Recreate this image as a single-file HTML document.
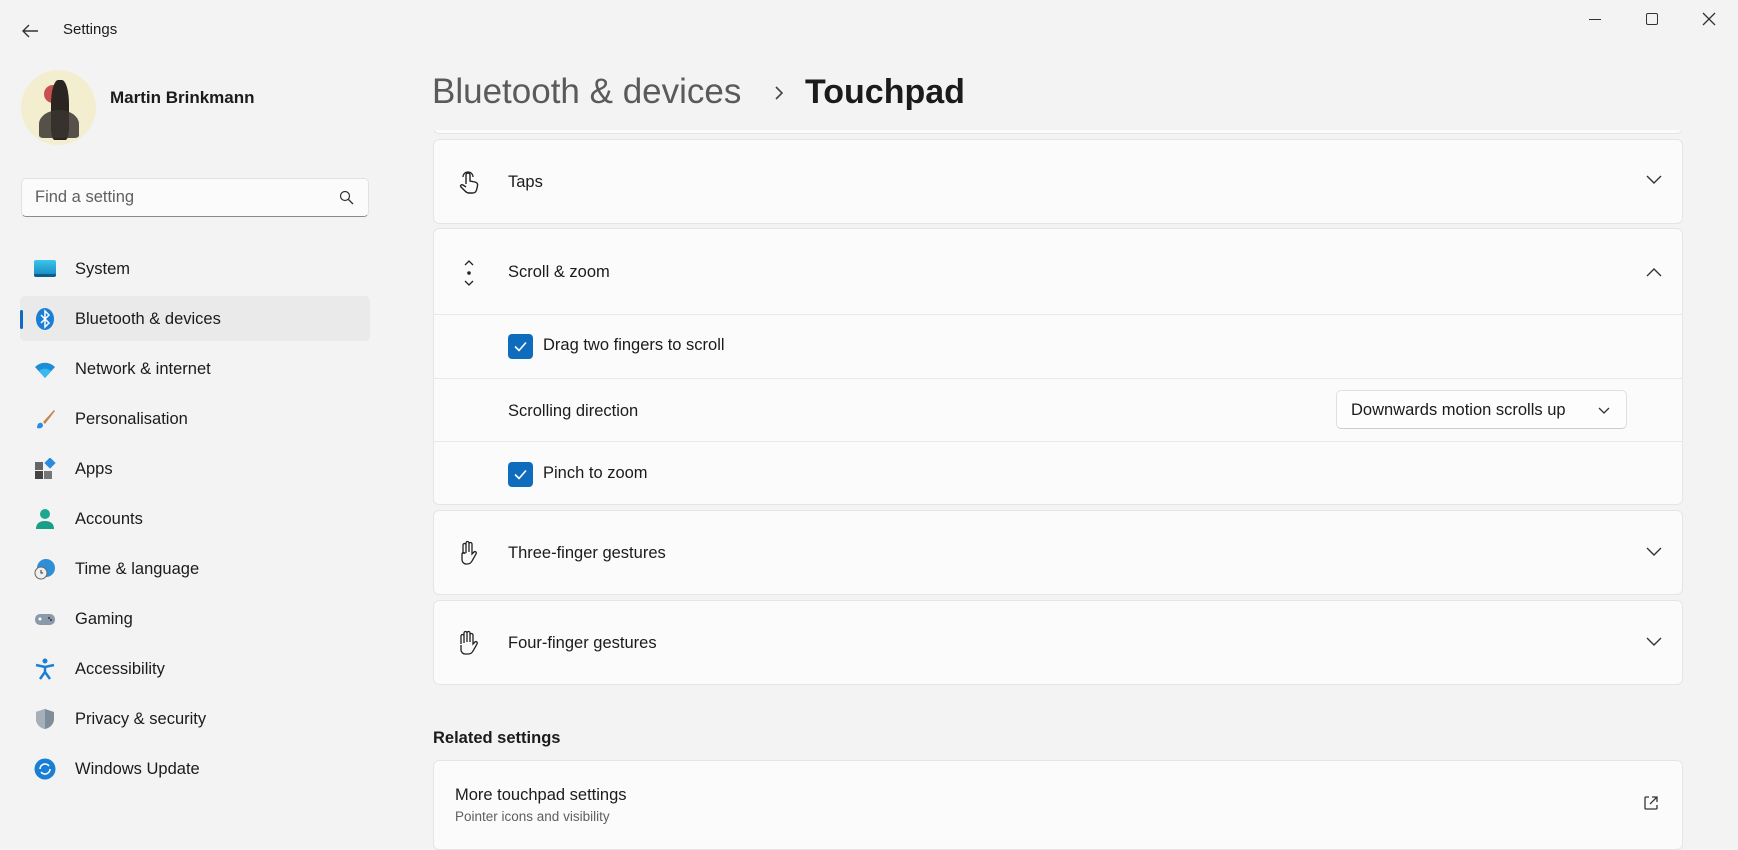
<!DOCTYPE html>
<html><head><meta charset="utf-8"><style>
*{box-sizing:border-box;margin:0;padding:0}
body{width:1738px;height:833px;overflow:hidden;background:#f3f3f3;font-family:"Liberation Sans",sans-serif;color:#1b1b1b;position:relative}
.a{position:absolute}
.nav{position:absolute;left:20px;width:350px;height:45px;display:flex;align-items:center;font-size:16.5px}
.nav .ic{position:absolute;left:14px;top:11px;width:22px;height:22px}
.nav span{position:absolute;left:55px}
.card{position:absolute;left:433px;width:1250px;background:#fbfbfb;border:1px solid #e5e5e5;border-radius:6px}
.lbl{position:absolute;left:74px;font-size:16.5px}
.chev{position:absolute;left:1212px}
.cb{position:absolute;left:74px;width:25px;height:25px;border-radius:4px;background:#0f6cbd}
.div{position:absolute;left:0;right:0;height:1px;background:#e8e8e8}
</style></head><body>
<svg class="a" style="left:20px;top:22px" width="20" height="18" viewBox="0 0 20 18"><path d="M18 9H3M9 3L3 9l6 6" stroke="#333" stroke-width="1.4" fill="none"/></svg>
<div class="a" style="left:63px;top:21px;font-size:15px">Settings</div>
<div class="a" style="left:1589px;top:19px;width:12px;height:1px;background:#333"></div>
<div class="a" style="left:1646px;top:13px;width:12px;height:12px;border:1.3px solid #333;border-radius:2px"></div>
<svg class="a" style="left:1702px;top:12px" width="14" height="14"><path d="M1 1L13 13M13 1L1 13" stroke="#333" stroke-width="1.3"/></svg>
<div class="a" style="left:21px;top:70px;width:75px;height:75px;border-radius:50%;background:#f3eed0;overflow:hidden">
<div class="a" style="left:23px;top:15px;width:18px;height:18px;border-radius:50%;background:#c85050"></div>
<div class="a" style="left:30px;top:10px;width:18px;height:60px;background:#2a2520;border-radius:40% 40% 20% 20%"></div>
<div class="a" style="left:18px;top:40px;width:40px;height:28px;background:#3a3530;border-radius:50% 50% 10% 10%;opacity:.85"></div>
</div>
<div class="a" style="left:110px;top:88px;font-size:17px;font-weight:bold">Martin Brinkmann</div>
<div class="a" style="left:21px;top:178px;width:348px;height:39px;background:#fbfbfb;border:1px solid #e2e2e2;border-bottom:1px solid #8a8a8a;border-radius:5px"></div>
<div class="a" style="left:35px;top:188px;font-size:16.5px;color:#5f5f5f">Find a setting</div>
<svg class="a" style="left:339px;top:190px" width="15" height="15"><circle cx="6" cy="6" r="4.5" stroke="#333" stroke-width="1.2" fill="none"/><path d="M9.5 9.5L14 14" stroke="#333" stroke-width="1.3"/></svg>
<div class="a" style="left:20px;top:296px;width:350px;height:45px;background:#eaeaea;border-radius:5px"></div>
<div class="a" style="left:20px;top:310px;width:3px;height:19px;background:#0f6cbd;border-radius:2px"></div>
<div class="nav" style="top:247px"><div class="ic" style="top:13px;height:17px;background:linear-gradient(#3bc6ea,#1a8fc8);border-radius:2px;border-bottom:3px solid #0b5e8a"></div><span>System</span></div>
<div class="nav" style="top:297px"><svg class="ic" viewBox="0 0 22 22"><ellipse cx="11" cy="11" rx="9" ry="11" fill="#1a7fd4"/><path d="M7 7l8 8-4 4V3l4 4-8 8" stroke="#fff" stroke-width="1.5" fill="none"/></svg><span>Bluetooth &amp; devices</span></div>
<div class="nav" style="top:347px"><svg class="ic" viewBox="0 0 22 22"><path d="M1 9a14 14 0 0 1 20 0l-10 11z" fill="#1a8fd8"/><path d="M5 13a9 9 0 0 1 12 0l-6 7z" fill="#3bb8ee"/></svg><span>Network &amp; internet</span></div>
<div class="nav" style="top:397px"><svg class="ic" viewBox="0 0 22 22"><path d="M20 2L9 14l2 2L21 3z" fill="#c9844a"/><path d="M3 20c0-4 2-6 5-5l1 2c0 3-3 4-6 3z" fill="#2c8ee0"/></svg><span>Personalisation</span></div>
<div class="nav" style="top:447px"><svg class="ic" viewBox="0 0 22 22"><rect x="1" y="4" width="8" height="8" fill="#666"/><rect x="1" y="13" width="8" height="8" fill="#444"/><rect x="10" y="13" width="8" height="8" fill="#777"/><rect x="12" y="1" width="8" height="8" fill="#2a8be0" transform="rotate(45 16 5)"/></svg><span>Apps</span></div>
<div class="nav" style="top:497px"><svg class="ic" viewBox="0 0 22 22"><circle cx="11" cy="6" r="5" fill="#1fa68f"/><path d="M2 21c0-6 4-8 9-8s9 2 9 8z" fill="#16a085"/></svg><span>Accounts</span></div>
<div class="nav" style="top:547px"><svg class="ic" viewBox="0 0 22 22"><circle cx="12" cy="10" r="9" fill="#2e8fd8"/><circle cx="7" cy="15" r="6" fill="#eee" stroke="#666"/><path d="M7 12v3h2" stroke="#333" fill="none"/></svg><span>Time &amp; language</span></div>
<div class="nav" style="top:597px"><svg class="ic" viewBox="0 0 22 22"><rect x="1" y="6" width="20" height="11" rx="5" fill="#8a9aaa"/><circle cx="6" cy="11" r="1.5" fill="#fff"/><circle cx="15" cy="10" r="1" fill="#333"/><circle cx="17" cy="12" r="1" fill="#333"/></svg><span>Gaming</span></div>
<div class="nav" style="top:647px"><svg class="ic" viewBox="0 0 22 22"><circle cx="11" cy="3" r="2.5" fill="#1a7fd4"/><path d="M2 7l9 2 9-2M11 9v5l-5 7M11 14l5 7" stroke="#1a7fd4" stroke-width="2.5" fill="none"/></svg><span>Accessibility</span></div>
<div class="nav" style="top:697px"><svg class="ic" viewBox="0 0 22 22"><path d="M11 1l9 3v7c0 5-4 9-9 10C6 20 2 16 2 11V4z" fill="#7f8c99"/><path d="M11 1v20C6 20 2 16 2 11V4z" fill="#a5b0ba"/></svg><span>Privacy &amp; security</span></div>
<div class="nav" style="top:747px"><svg class="ic" viewBox="0 0 22 22"><circle cx="11" cy="11" r="10.5" fill="#1a7fd4"/><path d="M6 11a5 5 0 0 1 9-3M16 11a5 5 0 0 1-9 3" stroke="#fff" stroke-width="1.6" fill="none"/></svg><span>Windows Update</span></div>
<div class="card" style="top:110px;height:24px;border-top:none"></div>
<div class="a" style="left:420px;top:60px;width:1280px;height:70px;background:#f3f3f3"></div>
<div class="a" style="left:432px;top:72px;font-size:35px;color:#5a5a5a">Bluetooth &amp; devices</div>
<svg class="a" style="left:773px;top:85px" width="12" height="16"><path d="M3 2l6 6-6 6" stroke="#444" stroke-width="1.6" fill="none"/></svg>
<div class="a" style="left:805px;top:73px;font-size:34px;font-weight:bold;color:#1b1b1b">Touchpad</div>
<div class="card" style="top:139px;height:85px">
<svg class="a" style="left:24px;top:30px" width="22" height="24" viewBox="0 0 22 24"><path d="M8 14V5a2 2 0 0 1 4 0v6l5 1c2 .5 3 2 2.5 4l-1 4c-.5 2-2 3-4 3H11c-2 0-3-1-4-2l-4-4c-1-1 0-3 2-2l3 2" stroke="#222" stroke-width="1.4" fill="none"/><path d="M5 7a5 5 0 0 1 10 0" stroke="#222" stroke-width="1.3" fill="none"/></svg>
<div class="lbl" style="top:33px">Taps</div>
<svg class="chev" style="top:35px" width="16" height="10"><path d="M1 1l7 7 7-7" stroke="#333" stroke-width="1.4" fill="none"/></svg>
</div>
<div class="card" style="top:228px;height:277px">
<svg class="a" style="left:29px;top:30px" width="12" height="28"><path d="M2 6l4-4 4 4M2 22l4 4 4-4" stroke="#222" stroke-width="1.3" fill="none"/><circle cx="6" cy="14" r="1.8" fill="#222"/></svg>
<div class="lbl" style="top:34px">Scroll &amp; zoom</div>
<svg class="chev" style="top:38px" width="16" height="10"><path d="M1 9l7-7 7 7" stroke="#333" stroke-width="1.4" fill="none"/></svg>
<div class="div" style="top:85px"></div>
<div class="cb" style="top:105px"><svg width="25" height="25"><path d="M7 12.5l4 4 7-8" stroke="#fff" stroke-width="1.6" fill="none"/></svg></div>
<div class="lbl" style="left:109px;top:107px">Drag two fingers to scroll</div>
<div class="div" style="top:149px"></div>
<div class="lbl" style="top:173px">Scrolling direction</div>
<div class="a" style="left:902px;top:161px;width:291px;height:39px;background:#fdfdfd;border:1px solid #e0e0e0;border-bottom-color:#ccc;border-radius:5px"></div>
<div class="a" style="left:917px;top:172px;font-size:16.5px">Downwards motion scrolls up</div>
<svg class="a" style="left:1164px;top:178px" width="12" height="8"><path d="M1 1l5 5 5-5" stroke="#333" stroke-width="1.3" fill="none"/></svg>
<div class="div" style="top:212px"></div>
<div class="cb" style="top:233px"><svg width="25" height="25"><path d="M7 12.5l4 4 7-8" stroke="#fff" stroke-width="1.6" fill="none"/></svg></div>
<div class="lbl" style="left:109px;top:235px">Pinch to zoom</div>
</div>
<div class="card" style="top:510px;height:85px">
<svg class="a" style="left:23px;top:29px" width="22" height="26" viewBox="0 0 22 26"><path d="M6 14V5a1.5 1.5 0 0 1 3 0v8M9 12V3a1.5 1.5 0 0 1 3 0v9M12 12V4a1.5 1.5 0 0 1 3 0v10l2-2c1-1 3 0 2 2l-4 7c-1 2-3 3-5 3H9c-2 0-4-2-4-4v-6a1.5 1.5 0 0 1 3 0" stroke="#222" stroke-width="1.3" fill="none"/></svg>
<div class="lbl" style="top:33px">Three-finger gestures</div>
<svg class="chev" style="top:36px" width="16" height="10"><path d="M1 1l7 7 7-7" stroke="#333" stroke-width="1.4" fill="none"/></svg>
</div>
<div class="card" style="top:600px;height:85px">
<svg class="a" style="left:23px;top:29px" width="22" height="26" viewBox="0 0 22 26"><path d="M4 14V6a1.5 1.5 0 0 1 3 0v7M7 12V3a1.5 1.5 0 0 1 3 0v9M10 12V3a1.5 1.5 0 0 1 3 0v9M13 12V5a1.5 1.5 0 0 1 3 0v9l2-2c1-1 3 0 2 2l-4 7c-1 2-3 3-5 3H8c-2 0-4-2-4-4v-5" stroke="#222" stroke-width="1.3" fill="none"/></svg>
<div class="lbl" style="top:33px">Four-finger gestures</div>
<svg class="chev" style="top:36px" width="16" height="10"><path d="M1 1l7 7 7-7" stroke="#333" stroke-width="1.4" fill="none"/></svg>
</div>
<div class="a" style="left:433px;top:729px;font-size:16.5px;font-weight:bold">Related settings</div>
<div class="card" style="top:760px;height:90px">
<div class="a" style="left:21px;top:25px;font-size:16.5px">More touchpad settings</div>
<div class="a" style="left:21px;top:48px;font-size:13.5px;color:#5f5f5f">Pointer icons and visibility</div>
<svg class="a" style="left:1209px;top:34px" width="16" height="16"><path d="M6 2H3a1 1 0 0 0-1 1v10a1 1 0 0 0 1 1h10a1 1 0 0 0 1-1v-3M9 2h5v5M14 2L7 9" stroke="#333" stroke-width="1.3" fill="none"/></svg>
</div>
</body></html>
